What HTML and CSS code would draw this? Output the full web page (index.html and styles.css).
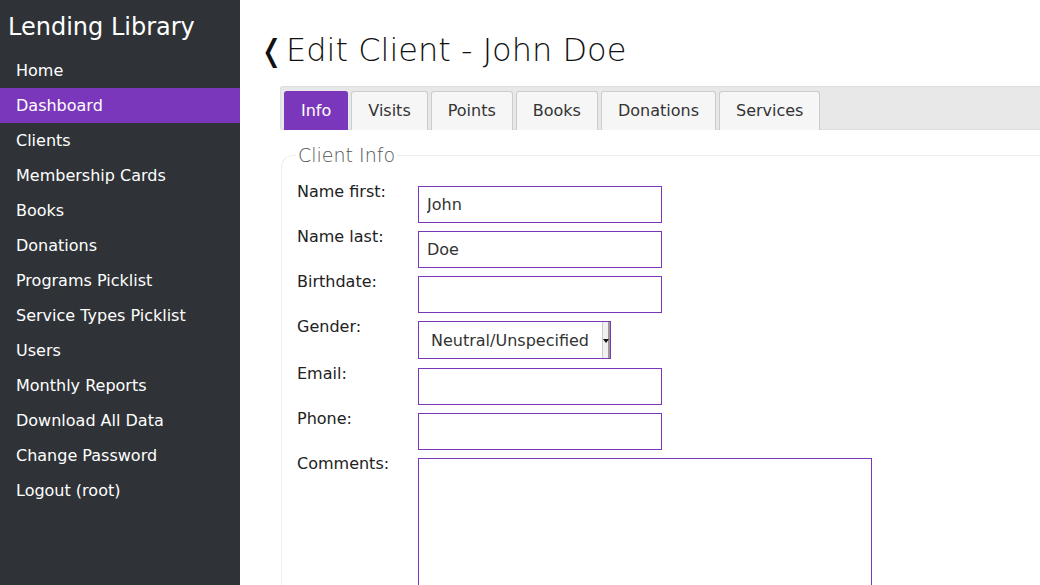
FILE: index.html
```html
<!DOCTYPE html>
<html>
<head>
<meta charset="utf-8">
<link rel="stylesheet" href="styles.css">
</head>
<body>
<div class="layout">
  <nav class="sidebar">
    <div class="brand">Lending Library</div>
    <ul class="menu">
      <li><a>Home</a></li>
      <li class="active"><a>Dashboard</a></li>
      <li><a>Clients</a></li>
      <li><a>Membership Cards</a></li>
      <li><a>Books</a></li>
      <li><a>Donations</a></li>
      <li><a>Programs Picklist</a></li>
      <li><a>Service Types Picklist</a></li>
      <li><a>Users</a></li>
      <li><a>Monthly Reports</a></li>
      <li><a>Download All Data</a></li>
      <li><a>Change Password</a></li>
      <li><a>Logout (root)</a></li>
    </ul>
  </nav>
  <main class="main">
    <h1 class="title"><span class="back">&#x276C;</span>Edit Client - John Doe</h1>
    <div class="tabs">
      <div class="tab active">Info</div>
      <div class="tab">Visits</div>
      <div class="tab">Points</div>
      <div class="tab">Books</div>
      <div class="tab">Donations</div>
      <div class="tab">Services</div>
    </div>
    <fieldset class="panel">
      <legend>Client Info</legend>
      <div class="row"><label>Name first:</label><input class="field" type="text" value="John"></div>
      <div class="row"><label>Name last:</label><input class="field" type="text" value="Doe"></div>
      <div class="row"><label>Birthdate:</label><input class="field" type="text"></div>
      <div class="row"><label>Gender:</label><div class="select"><span>Neutral/Unspecified</span><span class="arrow"></span></div></div>
      <div class="row"><label>Email:</label><input class="field" type="text"></div>
      <div class="row"><label>Phone:</label><input class="field" type="text"></div>
      <div class="row"><label>Comments:</label><textarea class="comments"></textarea></div>
    </fieldset>
  </main>
</div>
</body>
</html>
```
FILE: styles.css
```css
* { box-sizing: border-box; }
html, body { margin: 0; padding: 0; height: 100%; overflow: hidden; }
body { font-family: "DejaVu Sans", sans-serif; color: #222; background: #fff; }
.layout { display: flex; height: 585px; }
.sidebar { width: 240px; flex: none; background: #2f3337; color: #fff; }
.brand { font-size: 24px; padding: 11px 0 0 8px; height: 53px; line-height: 32px; }
.menu { list-style: none; margin: 0; padding: 0; }
.menu li { height: 35px; line-height: 35px; padding-left: 16px; font-size: 16px; }
.menu li.active { background: #7b37bb; }
.main { flex: 1; padding: 0 0 0 40px; overflow: hidden; }
.title { font-weight: 200; font-size: 32px; margin: 28px 0 0 -15px; line-height: 44px; height: 58px; color: #111; white-space: nowrap; }
.back { display: inline-block; width: 21px; overflow: visible; font-weight: 400; font-size: 30px; text-indent: -6px; vertical-align: baseline; }
.tabs { display: flex; background: #e8e8e8; border: 1px solid #ddd; border-right: none; border-bottom: 1px solid #ddd; border-radius: 3px 0 0 3px; padding: 4px 0 0 3px; gap: 3px; height: 44px; }
.tab { background: #f6f6f6; border: 1px solid #ccc; border-bottom: none; border-radius: 3px 3px 0 0; padding: 0 16px; height: 39px; line-height: 37px; font-size: 16px; color: #333; }
.tab.active { background: #7b37bb; border-color: #7b37bb; color: #fff; }
.panel { margin: 14px 0 0 1px; border: 1px solid #eee; border-right: none; border-bottom: none; border-radius: 12px 0 0 0; padding: 16px 0 0 15px; height: 600px; }
.panel legend { font-size: 19px; font-weight: 200; color: #555; padding: 0 2px; margin-left: -1px; }
.row { display: flex; align-items: flex-start; margin-bottom: 4px; }
.row label { width: 121px; flex: none; font-size: 16px; line-height: 20px; color: #222; }
.field { width: 244px; height: 37px; border: 1px solid #7b37bb; font-family: "DejaVu Sans", sans-serif; font-size: 16px; padding: 0 8px; color: #333; margin-top: 4px; outline: none; }
.select { width: 193px; height: 38px; border: 1px solid #7b37bb; display: flex; align-items: center; justify-content: space-between; padding-left: 12px; font-size: 16px; color: #333; margin-top: 4px; margin-bottom: 1px; }
.arrow { width: 8px; height: 36px; background: #f0f0f0; border-left: 1px solid #ccc; border-right: 2px solid #999; position: relative; }
.arrow::after { content: ""; position: absolute; left: 0; top: 17px; border-left: 3px solid transparent; border-right: 3px solid transparent; border-top: 4px solid #111; }
.comments { width: 454px; height: 140px; border: 1px solid #7b37bb; resize: none; margin-top: 4px; outline: none; }
```
